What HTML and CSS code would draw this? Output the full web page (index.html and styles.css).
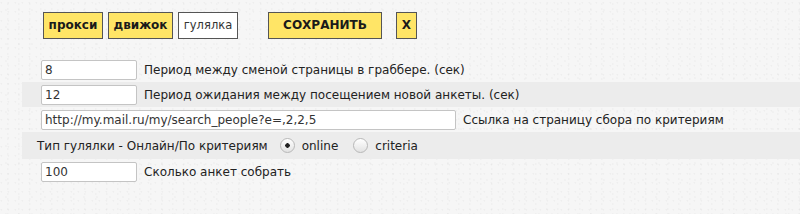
FILE: index.html
```html
<!doctype html>
<html lang="ru">

<head>
  <meta charset="UTF-8" />
  <title>Гулялка</title>
  <link rel="stylesheet" href="styles.css">
</head>

<body>
  <div class="toolbar">
    <div class="btn">прокси</div>
    <div class="btn">движок</div>
    <div class="btn btn-active">гулялка</div>
    <div class="btn btn-save">СОХРАНИТЬ</div>
    <div class="btn btn-close">X</div>
  </div>

  <div class="settings">
    <div class="row">
      <input class="field" type="text" value="8" />
      <span class="label">Период между сменой страницы в граббере. (сек)</span>
    </div>
    <div class="row row-alt">
      <input class="field" type="text" value="12" />
      <span class="label">Период ожидания между посещением новой анкеты. (сек)</span>
    </div>
    <div class="row">
      <input class="field field-wide" type="text" value="http://my.mail.ru/my/search_people?e=,2,2,5" />
      <span class="label">Ссылка на страницу сбора по критериям</span>
    </div>
    <div class="row row-alt row-radio">
      <span class="label">Тип гулялки - Онлайн/По критериям</span>
      <label class="choice"><input type="radio" name="mode" checked /> online</label>
      <label class="choice"><input type="radio" name="mode" /> criteria</label>
    </div>
    <div class="row">
      <input class="field" type="text" value="100" />
      <span class="label">Сколько анкет собрать</span>
    </div>
  </div>
</body>

</html>
```

FILE: styles.css
```css
body {
  margin: 0;
  font-family: "DejaVu Sans", Verdana, sans-serif;
  font-size: 12px;
  color: #222222;
  background-color: #f6f6f6;
  background-image:
    radial-gradient(circle at 20% 30%, rgba(0, 0, 0, 0.03) 0.6px, transparent 1.2px),
    radial-gradient(circle at 70% 80%, rgba(0, 0, 0, 0.025) 0.6px, transparent 1.2px),
    radial-gradient(circle at 45% 60%, rgba(0, 0, 0, 0.02) 0.8px, transparent 1.4px);
  background-size: 7px 9px, 11px 5px, 13px 17px;
  height: 214px;
  overflow: hidden;
}

.toolbar {
  display: flex;
  align-items: center;
  padding: 12px 0 0 43px;
  height: 27px;
}

.btn {
  box-sizing: border-box;
  height: 27px;
  line-height: 25px;
  padding: 0;
  margin-right: 5px;
  border: 1px solid #555555;
  background-color: #ffe566;
  font-size: 12px;
  font-weight: bold;
  color: #1a1a1a;
  text-align: center;
  width: 60px;
}

.btn:nth-child(2) {
  width: 65px;
}

.btn-active {
  background-color: #ffffff;
  font-weight: normal;
  font-size: 11.5px;
  color: #333333;
}

.btn-save {
  margin-left: 25px;
  width: 114px;
  margin-right: 14px;
}

.btn-close {
  width: 21px;
}

.settings {
  margin: 18px 0 0 22px;
}

.row {
  display: flex;
  align-items: center;
  height: 25px;
  padding-left: 19px;
}

.row-alt {
  background-color: #ececec;
}

.row-radio {
  height: 27px;
  padding-left: 15px;
}

.field {
  box-sizing: border-box;
  width: 96px;
  height: 20px;
  margin: 0 7px 0 0;
  padding: 0 3px;
  border: 1px solid #c4c4c4;
  border-radius: 2px;
  background-color: #ffffff;
  font-family: "DejaVu Sans", Verdana, sans-serif;
  font-size: 12px;
  color: #333333;
}

.field-wide {
  width: 415px;
}

.label {
  white-space: nowrap;
}

.choice {
  display: flex;
  align-items: center;
  margin-left: 12px;
}

.choice input {
  appearance: none;
  box-sizing: border-box;
  width: 15px;
  height: 15px;
  margin: 0 7px 0 0;
  border: 1px solid #b8b8b8;
  border-radius: 50%;
  background: linear-gradient(#ffffff, #e2e2e2);
}

.choice input:checked {
  background: radial-gradient(circle, #222222 0 2px, transparent 2.5px), linear-gradient(#ffffff, #e2e2e2);
}

.choice + .choice {
  margin-left: 15px;
}
```
